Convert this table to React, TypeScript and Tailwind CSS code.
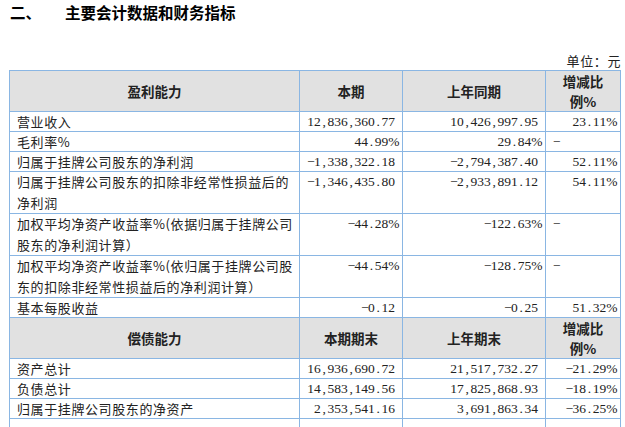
import React from "react";

interface Row {
  label: string[];
  cur: string;
  prev: string;
  change: string;
}

const profitRows: Row[] = [
  { label: ["营业收入"], cur: "12,836,360.77", prev: "10,426,997.95", change: "23.11%" },
  { label: ["毛利率%"], cur: "44.99%", prev: "29.84%", change: "-" },
  { label: ["归属于挂牌公司股东的净利润"], cur: "-1,338,322.18", prev: "-2,794,387.40", change: "52.11%" },
  {
    label: ["归属于挂牌公司股东的扣除非经常性损益后的", "净利润"],
    cur: "-1,346,435.80",
    prev: "-2,933,891.12",
    change: "54.11%",
  },
  {
    label: ["加权平均净资产收益率%(依据归属于挂牌公司", "股东的净利润计算）"],
    cur: "-44.28%",
    prev: "-122.63%",
    change: "-",
  },
  {
    label: ["加权平均净资产收益率%(依归属于挂牌公司股", "东的扣除非经常性损益后的净利润计算）"],
    cur: "-44.54%",
    prev: "-128.75%",
    change: "-",
  },
  { label: ["基本每股收益"], cur: "-0.12", prev: "-0.25", change: "51.32%" },
];

const debtRows: Row[] = [
  { label: ["资产总计"], cur: "16,936,690.72", prev: "21,517,732.27", change: "-21.29%" },
  { label: ["负债总计"], cur: "14,583,149.56", prev: "17,825,868.93", change: "-18.19%" },
  { label: ["归属于挂牌公司股东的净资产"], cur: "2,353,541.16", prev: "3,691,863.34", change: "-36.25%" },
];

const border = "border border-[#8ab6e3]";
const head = `${border} bg-[#e1e1e1] p-0 text-center align-middle leading-[20px] font-bold text-[#222] text-[13.5px]`;
const serif = { fontFamily: '"Liberation Serif", serif' };

// half-width digits, like the song typeface in the source pdf
function Num({ value }: { value: string }) {
  return (
    <span className="whitespace-nowrap">
      {value.split("").map((ch, i) => (
        <span key={i} className="inline-block w-[6.75px] text-center">
          {ch === "-" ? "−" : ch}
        </span>
      ))}
    </span>
  );
}

function HeaderRow({ title, c1, c2 }: { title: string; c1: string; c2: string }) {
  return (
    <tr className="h-[41px]">
      <td className={head}>{title}</td>
      <td className={head}>{c1}</td>
      <td className={head}>{c2}</td>
      <td className={head}>
        增减比
        <br />
        例%
      </td>
    </tr>
  );
}

function DataRow({ row }: { row: Row }) {
  const lead = row.label.length > 1 ? "leading-[20.5px]" : "leading-[19px]";
  const cell = `${border} px-[7px] py-0 align-top ${lead}`;
  return (
    <tr>
      <td className={`${cell} text-[13px] tracking-[0.6px]`}>
        {row.label.map((l, i) => (
          <div key={i} className="whitespace-nowrap">
            {l}
          </div>
        ))}
      </td>
      <td className={`${cell} text-right text-[13.5px]`} style={serif}>
        <Num value={row.cur} />
      </td>
      <td className={`${cell} text-right text-[13.5px]`} style={serif}>
        <Num value={row.prev} />
      </td>
      <td
        className={`${cell} text-[13.5px] ${row.change === "-" ? "text-left" : "text-right"}`}
        style={serif}
      >
        <Num value={row.change} />
      </td>
    </tr>
  );
}

export default function App() {
  return (
    <div
      className="h-[427px] w-[625px] overflow-hidden bg-white text-[#222]"
      style={{ fontFamily: '"Noto Sans CJK SC", sans-serif' }}
    >
      <div className="flex items-center pl-[10px] pt-[2px] text-[15.5px] font-bold leading-[20px] text-black">
        <span className="w-[55px]">二、</span>
        <span>主要会计数据和财务指标</span>
      </div>

      <div className="mt-[30px] pr-[4px] text-right text-[13px] leading-[18px] tracking-[0.6px]">单位：元</div>

      <table className="ml-[9px] w-[611px] table-fixed border-collapse">
        <colgroup>
          <col className="w-[290px]" />
          <col className="w-[103px]" />
          <col className="w-[143px]" />
          <col className="w-[75px]" />
        </colgroup>
        <tbody>
          <HeaderRow title="盈利能力" c1="本期" c2="上年同期" />
          {profitRows.map((r, i) => (
            <DataRow key={i} row={r} />
          ))}
          <HeaderRow title="偿债能力" c1="本期期末" c2="上年期末" />
          {debtRows.map((r, i) => (
            <DataRow key={i} row={r} />
          ))}
          <tr className="h-[20px]">
            <td className={border}>&nbsp;</td>
            <td className={border}>&nbsp;</td>
            <td className={border}>&nbsp;</td>
            <td className={border}>&nbsp;</td>
          </tr>
        </tbody>
      </table>
    </div>
  );
}
